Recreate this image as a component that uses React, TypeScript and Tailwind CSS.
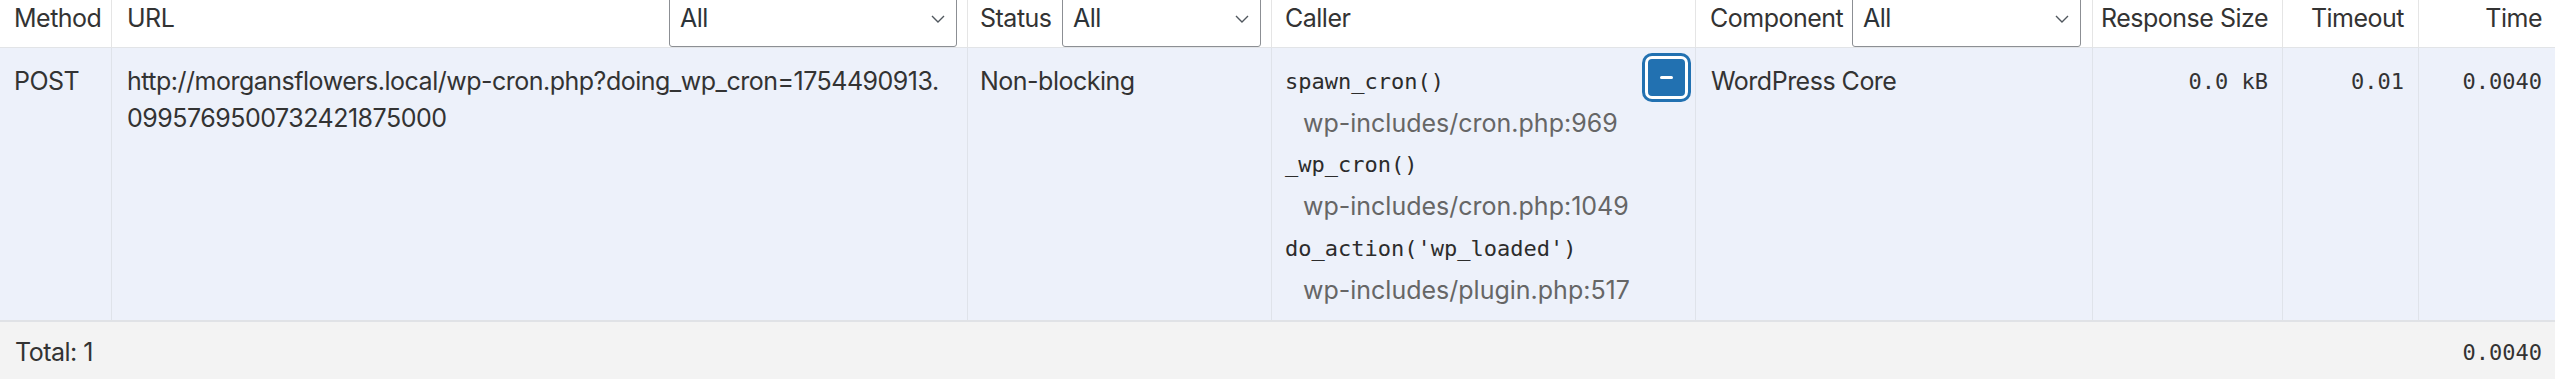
import React from "react";

const cols =
  "grid grid-cols-[112px_856px_304px_424px_397px_190px_136px_136px]";
const sans = "font-['Inter','Liberation_Sans',sans-serif]";
const mono = "font-['DejaVu_Sans_Mono','Liberation_Mono',monospace]";

const Chevron: React.FC = () => (
  <svg
    width="14"
    height="8"
    viewBox="0 0 14 8"
    fill="none"
    className="pointer-events-none absolute right-[12px] top-1/2 -translate-y-1/2"
  >
    <path d="M1 1l6 6 6-6" stroke="#50575e" strokeWidth="1.4" />
  </svg>
);

const Filter: React.FC<{ width: string }> = ({ width }) => (
  <div className={`relative ml-auto h-[56px] shrink-0 ${width}`}>
    <select className="h-full w-full appearance-none rounded-[3px] border border-[#8c8f94] bg-white pl-[10px] text-[25px] tracking-[-0.02em] text-[#2c3338] outline-none">
      <option>All</option>
    </select>
    <Chevron />
  </div>
);

const trace = [
  { fn: "spawn_cron()", file: "wp-includes/cron.php:969" },
  { fn: "_wp_cron()", file: "wp-includes/cron.php:1049" },
  { fn: "do_action('wp_loaded')", file: "wp-includes/plugin.php:517" },
];

export default function App() {
  const head =
    "flex h-[47px] items-center whitespace-nowrap pb-[9px] border-r border-[#e5e5e5]";
  const cell = "border-r border-[#dfe3ea] pt-[15px] leading-[37px]";

  return (
    <div
      className={`w-full bg-white text-[25px] tracking-[-0.02em] text-[#333] ${sans}`}
    >
      <div className="w-[2555px]">
        {/* Header */}
        <div
          className={`${cols} grid-rows-[47px] h-[48px] border-b border-[#e2e4e7] bg-white`}
        >
          <div className={`${head} pl-[14px]`}>Method</div>
          <div className={`${head} pl-[15px] pr-[10px]`}>
            <span>URL</span>
            <Filter width="w-[288px]" />
          </div>
          <div className={`${head} pl-[12px] pr-[10px]`}>
            <span>Status</span>
            <Filter width="w-[199px]" />
          </div>
          <div className={`${head} pl-[13px]`}>Caller</div>
          <div className={`${head} pl-[14px] pr-[11px]`}>
            <span>Component</span>
            <Filter width="w-[229px]" />
          </div>
          <div className={`${head} justify-end pr-[14px]`}>Response Size</div>
          <div className={`${head} justify-end pr-[14px]`}>Timeout</div>
          <div className="flex h-[47px] items-center justify-end pb-[9px] pr-[13px]">
            Time
          </div>
        </div>

        {/* Row */}
        <div
          className={`${cols} h-[274px] border-b-2 border-[#e0e2e6] bg-[#edf1fa]`}
        >
          <div className={`${cell} pl-[14px]`}>POST</div>
          <div className={`${cell} pl-[15px] pr-[8px]`}>
            <div className="whitespace-nowrap">
              http://morgansflowers.local/wp-cron.php?doing_wp_cron=1754490913.
            </div>
            <div>0995769500732421875000</div>
          </div>
          <div className={`${cell} pl-[12px]`}>Non-blocking</div>
          <div className="relative border-r border-[#dfe3ea] pl-[13px] pt-[13px]">
            {trace.map((t) => (
              <div key={t.fn}>
                <div
                  className={`${mono} text-[22px] leading-[41.7px] tracking-normal text-[#2c2c2c]`}
                >
                  {t.fn}
                </div>
                <div className="pl-[18px] text-[25px] leading-[41.7px] tracking-normal text-[#666]">
                  {t.file}
                </div>
              </div>
            ))}
            <button className="absolute right-[4px] top-[5px] flex h-[49px] w-[49px] items-center justify-center rounded-[10px] bg-[#2271b1] p-[3px]">
              <span className="flex h-full w-full items-center justify-center rounded-[7px] border-[3px] border-white bg-[#2271b1]">
                <span className="h-[3px] w-[13px] rounded-full bg-white" />
              </span>
            </button>
          </div>
          <div className={`${cell} pl-[15px]`}>WordPress Core</div>
          <div
            className={`${cell} ${mono} pr-[14px] text-right text-[22px] tracking-normal`}
          >
            0.0 kB
          </div>
          <div
            className={`${cell} ${mono} pr-[14px] text-right text-[22px] tracking-normal`}
          >
            0.01
          </div>
          <div
            className={`pt-[15px] leading-[37px] ${mono} pr-[13px] text-right text-[22px] tracking-normal`}
          >
            0.0040
          </div>
        </div>

        {/* Footer */}
        <div className={`${cols} h-[57px] bg-[#f3f3f3]`}>
          <div className="col-span-7 pl-[15px] pt-[12px] leading-[37px]">
            Total: 1
          </div>
          <div
            className={`${mono} pr-[13px] pt-[12px] text-right text-[22px] leading-[37px] tracking-normal`}
          >
            0.0040
          </div>
        </div>
      </div>
    </div>
  );
}
